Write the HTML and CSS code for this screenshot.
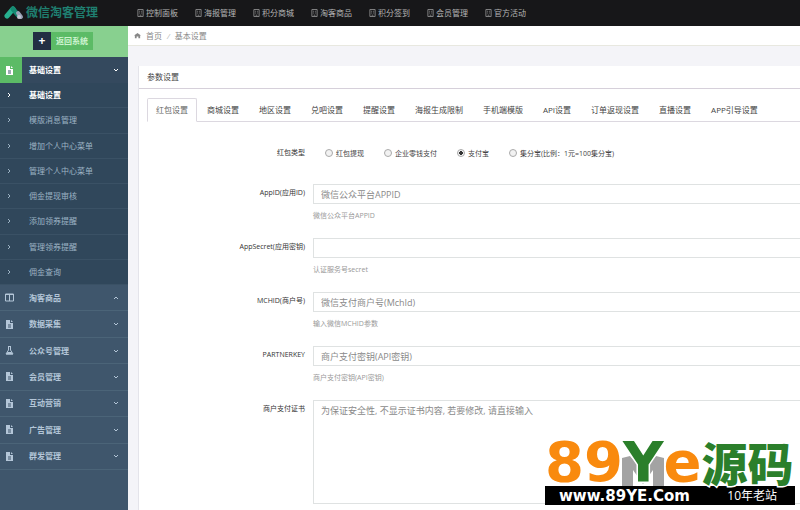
FILE: index.html
```html
<!DOCTYPE html>
<html lang="zh-CN">
<head>
    <meta charset="UTF-8">
    <meta name="viewport" content="width=device-width, initial-scale=1.0">
    <title>微信淘客管理</title>
    <link rel="stylesheet" href="styles.css">
</head>
<body>

<!-- Shared icons -->
<svg class="sprite" aria-hidden="true">
    <symbol id="i-nav" viewBox="0 0 8 9">
        <path d="M1 .5h6v8H1z" fill="none" stroke="currentColor"/>
        <path d="M2.5 2.5h1M4.5 2.5h1M2.5 4.5h1M4.5 4.5h1M3 7h2" stroke="currentColor"/>
    </symbol>
    <symbol id="i-file" viewBox="0 0 9 9">
        <path d="M1 0h4v3h3v6H1z M6 0l2 2H6z" fill="currentColor"/>
        <path d="M3 5h3M3 7h3" stroke="#3f556b"/>
    </symbol>
    <symbol id="i-columns" viewBox="0 0 9 9">
        <path d="M.5 1h8v7h-8zM4.5 1v7M0 1.5h9" fill="none" stroke="currentColor"/>
    </symbol>
    <symbol id="i-flask" viewBox="0 0 9 9">
        <path d="M3 .5h3M3.5 1v3L1 8h7L5.5 4V1" fill="none" stroke="currentColor"/>
        <path d="M2.5 6h4L8 8.5H1z" fill="currentColor"/>
    </symbol>
    <symbol id="i-right" viewBox="0 0 6 6">
        <path d="M2 1l2 2-2 2" fill="none" stroke="currentColor"/>
    </symbol>
    <symbol id="i-down" viewBox="0 0 6 6">
        <path d="M1 2l2 2 2-2" fill="none" stroke="currentColor"/>
    </symbol>
    <symbol id="i-up" viewBox="0 0 6 6">
        <path d="M1 4l2-2 2 2" fill="none" stroke="currentColor"/>
    </symbol>
</svg>

<header class="header">
    <a class="brand" href="#">
        <svg class="logo" viewBox="0 0 20 14" aria-hidden="true">
            <path d="M3 10L9 3" stroke="#27b08f" stroke-width="5" stroke-linecap="round"/>
            <path d="M9 3l5 6" stroke="#168a72" stroke-width="5" stroke-linecap="round"/>
            <path d="M14 7l3 4" stroke="#9aa0b4" stroke-width="4" stroke-linecap="round"/>
            <circle cx="15" cy="11" r="2" fill="#c4c6d2"/>
        </svg>
        <span>微信淘客管理</span>
    </a>
    <nav class="top-nav">
        <a href="#"><svg><use href="#i-nav"/></svg>控制面板</a>
        <a href="#"><svg><use href="#i-nav"/></svg>海报管理</a>
        <a href="#"><svg><use href="#i-nav"/></svg>积分商城</a>
        <a href="#"><svg><use href="#i-nav"/></svg>淘客商品</a>
        <a href="#"><svg><use href="#i-nav"/></svg>积分签到</a>
        <a href="#"><svg><use href="#i-nav"/></svg>会员管理</a>
        <a href="#"><svg><use href="#i-nav"/></svg>官方活动</a>
    </nav>
</header>

<div class="wrapper">
    <aside class="sidebar">
        <div class="back-bar">
            <button class="back-btn" type="button"><span class="plus">+</span><span class="back-text">返回系统</span></button>
        </div>
        <a class="menu-item active" href="#"><span class="menu-icon"><svg><use href="#i-file"/></svg></span><b>基础设置</b><svg class="caret"><use href="#i-down"/></svg></a>
        <div class="submenu">
            <a class="current" href="#"><svg><use href="#i-right"/></svg>基础设置</a>
            <a href="#"><svg><use href="#i-right"/></svg>模版消息管理</a>
            <a href="#"><svg><use href="#i-right"/></svg>增加个人中心菜单</a>
            <a href="#"><svg><use href="#i-right"/></svg>管理个人中心菜单</a>
            <a href="#"><svg><use href="#i-right"/></svg>佣金提现审核</a>
            <a href="#"><svg><use href="#i-right"/></svg>添加领券提醒</a>
            <a href="#"><svg><use href="#i-right"/></svg>管理领券提醒</a>
            <a href="#"><svg><use href="#i-right"/></svg>佣金查询</a>
        </div>
        <div class="menu">
            <a class="menu-item" href="#"><span class="menu-icon"><svg><use href="#i-columns"/></svg></span><b>淘客商品</b><svg class="caret"><use href="#i-up"/></svg></a>
            <a class="menu-item" href="#"><span class="menu-icon"><svg><use href="#i-file"/></svg></span><b>数据采集</b><svg class="caret"><use href="#i-down"/></svg></a>
            <a class="menu-item" href="#"><span class="menu-icon"><svg><use href="#i-flask"/></svg></span><b>公众号管理</b><svg class="caret"><use href="#i-down"/></svg></a>
            <a class="menu-item" href="#"><span class="menu-icon"><svg><use href="#i-file"/></svg></span><b>会员管理</b><svg class="caret"><use href="#i-down"/></svg></a>
            <a class="menu-item" href="#"><span class="menu-icon"><svg><use href="#i-file"/></svg></span><b>互动营销</b><svg class="caret"><use href="#i-down"/></svg></a>
            <a class="menu-item" href="#"><span class="menu-icon"><svg><use href="#i-file"/></svg></span><b>广告管理</b><svg class="caret"><use href="#i-down"/></svg></a>
            <a class="menu-item" href="#"><span class="menu-icon"><svg><use href="#i-file"/></svg></span><b>群发管理</b><svg class="caret"><use href="#i-down"/></svg></a>
        </div>
    </aside>

    <main class="content">
        <div class="breadcrumb">
            <svg viewBox="0 0 8 8" aria-hidden="true"><path d="M4 1l4 3H7v3H5V5H3v2H1V4H0z" fill="currentColor"/></svg>
            <a href="#">首页</a><i>/</i><span>基本设置</span>
        </div>
        <section class="panel">
            <h2>参数设置</h2>
            <div class="tabs">
                <button class="on" type="button">红包设置</button>
                <button type="button">商城设置</button>
                <button type="button">地区设置</button>
                <button type="button">兑吧设置</button>
                <button type="button">提醒设置</button>
                <button type="button">海报生成限制</button>
                <button type="button">手机端模版</button>
                <button type="button">API设置</button>
                <button type="button">订单返现设置</button>
                <button type="button">直播设置</button>
                <button type="button">APP引导设置</button>
            </div>
            <form class="form">
                <div class="row radios" role="radiogroup" aria-labelledby="type-label">
                    <span class="label" id="type-label">红包类型</span>
                    <div class="options">
                        <label><input type="radio" name="type">红包提现</label>
                        <label><input type="radio" name="type">企业零钱支付</label>
                        <label><input type="radio" name="type" checked>支付宝</label>
                        <label><input type="radio" name="type">集分宝(比例：1元=100集分宝)</label>
                    </div>
                </div>
                <div class="row">
                    <label class="label" for="appid">AppID(应用ID)</label>
                    <div>
                        <input id="appid" type="text" placeholder="微信公众平台APPID">
                        <p>微信公众平台APPID</p>
                    </div>
                </div>
                <div class="row">
                    <label class="label" for="secret">AppSecret(应用密钥)</label>
                    <div>
                        <input id="secret" type="text">
                        <p>认证服务号secret</p>
                    </div>
                </div>
                <div class="row">
                    <label class="label" for="mchid">MCHID(商户号)</label>
                    <div>
                        <input id="mchid" type="text" placeholder="微信支付商户号(MchId)">
                        <p>输入微信MCHID参数</p>
                    </div>
                </div>
                <div class="row">
                    <label class="label" for="partner">PARTNERKEY</label>
                    <div>
                        <input id="partner" type="text" placeholder="商户支付密钥(API密钥)">
                        <p>商户支付密钥(API密钥)</p>
                    </div>
                </div>
                <div class="row last">
                    <label class="label" for="cert">商户支付证书</label>
                    <textarea id="cert" placeholder="为保证安全性, 不显示证书内容, 若要修改, 请直接输入"></textarea>
                </div>
            </form>
        </section>
    </main>
</div>

<!-- Site badge over the page corner -->
<div class="badge">
    <svg class="badge-shade" viewBox="0 0 42 30" aria-hidden="true">
        <path d="M0 30V2L8 0l13 15L34 0l8 2v28H31V14L21 28 11 14v16z" fill="#a3a3a3"/>
    </svg>
    <div class="badge-name"><span class="orange">89</span><span class="green">Y</span><span class="orange">e</span><span class="green cn">源码</span></div>
    <div class="badge-bar"><b>www.89YE.Com</b><span>10年老站</span></div>
</div>

</body>
</html>
```
FILE: styles.css
```css
* {
    box-sizing: border-box;
}

body {
    margin: 0;
    min-height: 100vh;
    display: flex;
    flex-direction: column;
    font-family: "Open Sans", "Noto Sans CJK SC", sans-serif;
    font-size: 8px;
    line-height: 12px;
    color: #444;
    background: #f4f4f8;
    overflow-x: hidden;
}

a {
    color: inherit;
    text-decoration: none;
}

button {
    font: inherit;
    color: inherit;
    border: 0;
    background: none;
    cursor: pointer;
}

.sprite {
    position: absolute;
    width: 0;
    height: 0;
}

/* Header */
.header {
    display: flex;
    align-items: center;
    height: 26px;
    background: #171719;
    color: #b5b5b5;
}

.brand {
    display: flex;
    align-items: center;
    width: 137px;
    padding-left: 4px;
    gap: 2px;
    font-size: 12px;
    line-height: 20px;
    color: #1f7f70;
    font-weight: bold;
}

.logo {
    width: 20px;
    height: 14px;
}

.top-nav {
    display: flex;
    gap: 17px;
}

.top-nav a {
    display: flex;
    align-items: center;
    white-space: nowrap;
}

.top-nav svg {
    width: 7px;
    height: 8px;
    margin-right: 2px;
    color: #8e8e8e;
}

.wrapper {
    display: flex;
    flex: 1;
}

/* Sidebar */
.sidebar {
    width: 128px;
    flex-shrink: 0;
    background: #3f566c;
    color: #b4c6d8;
}

.back-bar {
    display: flex;
    height: 31px;
    padding: 6px 33px;
    background: #88d08f;
}

.back-btn {
    display: flex;
    height: 18px;
    padding: 0;
    line-height: 18px;
    white-space: nowrap;
}

.plus {
    width: 18px;
    background: #232f43;
    color: #fff;
    font-size: 12px;
    font-weight: bold;
}

.back-text {
    width: 42px;
    background: #5cbb66;
    color: #cdf3cf;
    font-weight: bold;
}

.menu {
    display: grid;
    grid-auto-rows: 1fr;
    height: 185px;
}

.menu-item {
    display: flex;
    align-items: center;
    border-bottom: 1px solid #4b6478;
}

.menu-item.active {
    height: 26px;
    background: #34495e;
    color: #fff;
    border: 0;
}

.menu-icon {
    display: flex;
    align-items: center;
    align-self: stretch;
    width: 22px;
    margin-right: 7px;
    padding-left: 5px;
}

.active .menu-icon {
    background: #5cbb66;
}

.menu-icon svg {
    width: 9px;
    height: 9px;
}

.caret {
    width: 6px;
    height: 6px;
    margin-left: auto;
    margin-right: 9px;
}

.submenu {
    display: grid;
    grid-auto-rows: 1fr;
    height: 202px;
    background: #30475b;
    color: #9db3c4;
}

.submenu a {
    display: flex;
    align-items: center;
    border-bottom: 1px solid #3a5165;
}

.submenu svg {
    width: 6px;
    height: 6px;
    margin: 0 17px 0 6px;
}

.submenu .current {
    color: #fff;
    font-weight: bold;
}

/* Content */
.content {
    flex: 1;
    min-width: 0;
    display: flex;
    flex-direction: column;
}

.breadcrumb {
    display: flex;
    align-items: center;
    height: 20px;
    padding-left: 6px;
    background: #fff;
    border-bottom: 1px solid #e8e8e0;
    color: #888;
}

.breadcrumb svg {
    width: 7px;
    height: 7px;
    margin-right: 5px;
}

.breadcrumb i {
    margin: 0 5px;
    color: #bbb;
}

.panel {
    flex: 1;
    margin: 20px 0 0 10px;
    background: #fff;
    border-left: 1px solid #e4e4ea;
}

.panel h2 {
    margin: 0;
    height: 23px;
    padding-left: 8px;
    font-size: 8px;
    font-weight: normal;
    line-height: 22px;
    border-bottom: 1px solid #d6d0da;
}

.tabs {
    display: flex;
    margin: 9px 0 0 8px;
    height: 24px;
    border-bottom: 1px solid #dcd8e0;
}

.tabs button {
    height: 24px;
    padding: 0 10px;
    white-space: nowrap;
}

.tabs .on {
    padding: 0 8px;
    border: 1px solid #dcd8e0;
    border-bottom-color: #fff;
    border-radius: 2px 2px 0 0;
    color: #666;
}

/* Form */
.form {
    padding-top: 22px;
    font-size: 7px;
}

.row {
    display: grid;
    grid-template-columns: 166px 1fr;
    column-gap: 8px;
    height: 54px;
}

.row.radios {
    height: 40px;
}

.row.last {
    height: 104px;
}

.label {
    padding-top: 3px;
    text-align: right;
    color: #333;
}

.options {
    display: flex;
    gap: 20px;
    height: 20px;
    padding-left: 12px;
}

.options label {
    display: flex;
    align-items: center;
    white-space: nowrap;
}

.options input {
    appearance: none;
    width: 8px;
    height: 8px;
    margin: 0 3px 2px 0;
    border: 1px solid #aaa;
    border-radius: 50%;
    background: #f2f2f2;
}

.options input:checked {
    background: radial-gradient(#333 0 2px, #f2f2f2 2px);
}

.row input[type="text"],
textarea {
    display: block;
    width: 100%;
    height: 20px;
    padding: 0 7px;
    font: inherit;
    font-size: 9px;
    color: #555;
    border: 1px solid #dfe2e2;
    border-right: 0;
    background: #fff;
    outline: 0;
}

textarea {
    height: 104px;
    padding-top: 4px;
    resize: none;
}

::placeholder {
    color: #8a8a8a;
}

.row p {
    margin: 6px 0 0;
    color: #999;
}

/* Badge */
.badge {
    position: absolute;
    right: 5px;
    bottom: 5px;
    width: 250px;
}

.badge-shade {
    position: absolute;
    left: 77px;
    bottom: 19px;
    width: 42px;
    height: 30px;
}

.badge-name {
    position: relative;
    display: flex;
    align-items: baseline;
    height: 46px;
    font-family: "DejaVu Sans", sans-serif;
    font-size: 56px;
    font-weight: bold;
    line-height: 42px;
    white-space: nowrap;
    -webkit-text-stroke: 3px #fff;
    paint-order: stroke fill;
}

.badge-name .cn {
    font-family: "Noto Sans CJK SC", sans-serif;
    font-size: 46px;
    font-weight: 900;
}

.orange {
    color: #f98a0e;
}

.green {
    color: #2b7f2b;
}

.badge-bar {
    display: flex;
    align-items: center;
    justify-content: space-between;
    height: 19px;
    padding: 0 18px 0 14px;
    background: #000;
    color: #fff;
    font-size: 12px;
}

.badge-bar b {
    font-family: "DejaVu Sans", sans-serif;
    font-size: 15px;
}
```
